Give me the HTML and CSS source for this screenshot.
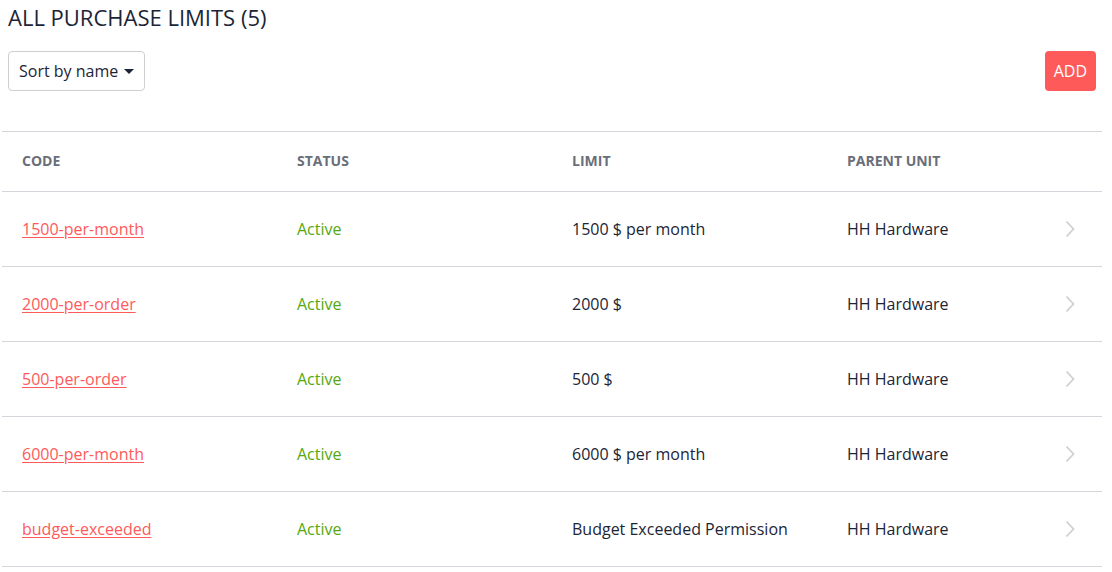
FILE: index.html
```html
<!DOCTYPE html>
<html lang="en">
<head>
<meta charset="utf-8">
<title>All purchase limits</title>
<link rel="stylesheet" href="styles.css">
</head>
<body>
<main class="page">
  <h1 class="title">ALL PURCHASE LIMITS (5)</h1>
  <div class="toolbar">
    <button class="sort">Sort by name <span class="caret"></span></button>
    <button class="add">ADD</button>
  </div>
  <table class="list">
    <thead>
      <tr><th>Code</th><th>Status</th><th>Limit</th><th>Parent Unit</th></tr>
    </thead>
    <tbody>
      <tr><td><a href="#">1500-per-month</a></td><td class="active">Active</td><td class="limit">1500 $ per month</td><td class="unit">HH Hardware<svg class="chev" viewBox="0 0 10 18" width="10" height="18"><path d="M1.5 1.5l7 7.5-7 7.5" fill="none" stroke="#cfcfd4" stroke-width="1.8"/></svg></td></tr>
      <tr><td><a href="#">2000-per-order</a></td><td class="active">Active</td><td class="limit">2000 $</td><td class="unit">HH Hardware<svg class="chev" viewBox="0 0 10 18" width="10" height="18"><path d="M1.5 1.5l7 7.5-7 7.5" fill="none" stroke="#cfcfd4" stroke-width="1.8"/></svg></td></tr>
      <tr><td><a href="#">500-per-order</a></td><td class="active">Active</td><td class="limit">500 $</td><td class="unit">HH Hardware<svg class="chev" viewBox="0 0 10 18" width="10" height="18"><path d="M1.5 1.5l7 7.5-7 7.5" fill="none" stroke="#cfcfd4" stroke-width="1.8"/></svg></td></tr>
      <tr><td><a href="#">6000-per-month</a></td><td class="active">Active</td><td class="limit">6000 $ per month</td><td class="unit">HH Hardware<svg class="chev" viewBox="0 0 10 18" width="10" height="18"><path d="M1.5 1.5l7 7.5-7 7.5" fill="none" stroke="#cfcfd4" stroke-width="1.8"/></svg></td></tr>
      <tr><td><a href="#">budget-exceeded</a></td><td class="active">Active</td><td class="limit">Budget Exceeded Permission</td><td class="unit">HH Hardware<svg class="chev" viewBox="0 0 10 18" width="10" height="18"><path d="M1.5 1.5l7 7.5-7 7.5" fill="none" stroke="#cfcfd4" stroke-width="1.8"/></svg></td></tr>
    </tbody>
  </table>
</main>
</body>
</html>
```

FILE: styles.css
```css
* { box-sizing: border-box; }
html, body { margin: 0; background: #fff; }
body {
  font-family: "Open Sans", "Liberation Sans", sans-serif;
  color: #1c2536;
}
.page { padding: 2px 10px 0 2px; }
.title {
  margin: 0 0 0 6px;
  font-size: 22px;
  font-weight: 400;
  line-height: 30px;
  color: #1c2536;
}
.toolbar {
  display: flex;
  justify-content: space-between;
  align-items: center;
  margin: 19px 6px 0 6px;
}
.sort {
  display: flex;
  align-items: center;
  gap: 6px;
  height: 40px;
  padding: 0 10px 0 10px;
  border: 1px solid #cfcfd3;
  border-radius: 4px;
  background: #fff;
  font: 400 16px "Open Sans", "Liberation Sans", sans-serif;
  color: #1c2536;
}
.caret {
  width: 0; height: 0;
  border-left: 5px solid transparent;
  border-right: 5px solid transparent;
  border-top: 5px solid #1c2536;
}
.add {
  height: 40px;
  padding: 0 9px;
  border: none;
  border-radius: 4px;
  background: #ff5a5a;
  color: #fff;
  font: 400 16px "Open Sans", "Liberation Sans", sans-serif;
}
.list {
  width: 1100px;
  margin-top: 40px;
  border-collapse: collapse;
  table-layout: fixed;
}
.list th, .list td {
  width: 275px;
  text-align: left;
  padding: 0 0 0 20px;
  border-top: 1px solid #d5d5db;
  border-bottom: 1px solid #d5d5db;
}
.list th {
  height: 60px;
  padding-bottom: 2px;
  font-size: 14px;
  font-weight: 700;
  text-transform: uppercase;
  color: #6a6e79;
}
.list td {
  height: 75px;
  font-size: 16px;
}
.list a { color: #ff5a5a; text-decoration: underline; text-underline-offset: 2px; }
.active { color: #55a80f; }
.limit { color: #1c2536; padding-bottom: 2px; }
.unit { position: relative; }
.chev { position: absolute; right: 27px; top: 28px; }
```
